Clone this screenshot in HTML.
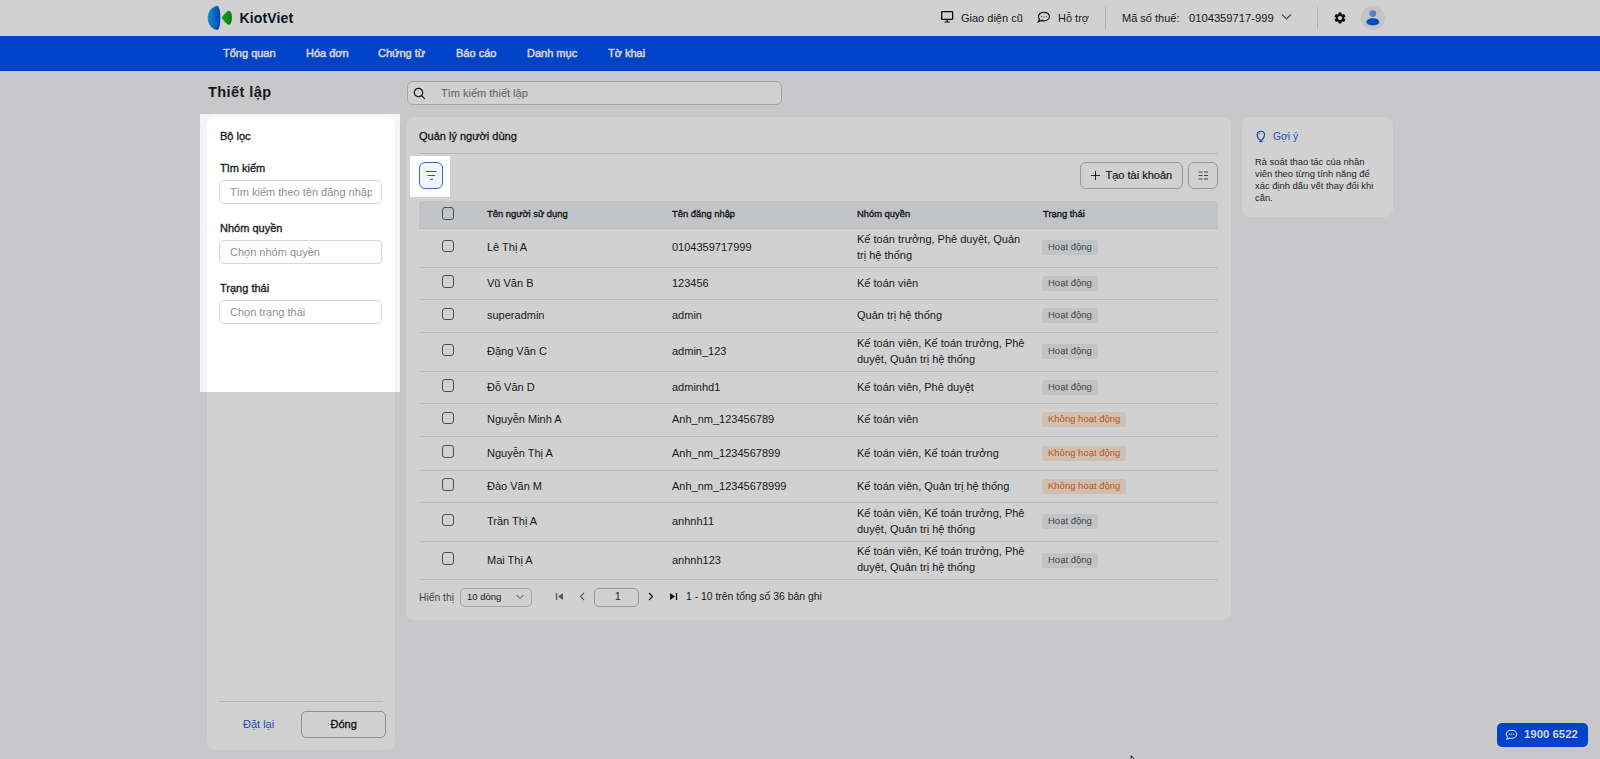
<!DOCTYPE html>
<html><head><meta charset="utf-8">
<style>
*{box-sizing:border-box;margin:0;padding:0}
html,body{width:1600px;height:759px;overflow:hidden}
body{background:#f4f5f7;font-family:"Liberation Sans",sans-serif;color:#1c1c1e;position:relative}
.a{position:absolute}
.hdr{left:0;top:0;width:1600px;height:36px;background:#fff}
.nav{left:0;top:36px;width:1600px;height:35px;background:#0052f5}
.nav span{position:absolute;top:0;line-height:35px;color:#fff;font-size:11px;-webkit-text-stroke:0.5px #fff;white-space:nowrap}
.t11{font-size:11px;white-space:nowrap}
.card{background:#fff;border-radius:8px}
.inp{border:1px solid #d5d8dd;border-radius:5px;background:#fff}
.lbl{font-size:11px;-webkit-text-stroke:0.35px #1c1c1e;white-space:nowrap}
.ph{color:#8a9099;font-size:11px;white-space:nowrap;overflow:hidden}
.cb{position:absolute;left:442px;width:12px;height:12.5px;border:1.2px solid #5b6270;border-radius:3px}
.row{position:absolute;left:419px;width:799px;border-bottom:1px solid #dfe2e6}
.cell{position:absolute;font-size:11px;white-space:nowrap;line-height:15px}
.th{font-size:9.4px;-webkit-text-stroke:0.35px #1c1c1e;white-space:nowrap;color:#1c1c1e}
.bdg{position:absolute;left:1042px;height:15px;border-radius:3px;background:#eceef1;color:#50555c;font-size:9.5px;line-height:14px;padding:0 6px;white-space:nowrap}
.bdg.off{background:#fdebd9;color:#ea6a14}
</style></head><body>
<!-- header -->
<div class="a hdr">
  <svg class="a" style="left:207px;top:5px" width="26" height="26" viewBox="0 0 26 26">
    <defs><linearGradient id="lg1" x1="0" x2="1" y1="0" y2="0"><stop offset="0" stop-color="#1ab0f0"/><stop offset="1" stop-color="#0052e0"/></linearGradient>
    <linearGradient id="lg2" x1="0" x2="1"><stop offset="0" stop-color="#16d020"/><stop offset="1" stop-color="#0a9a18"/></linearGradient></defs>
    <path d="M10 0.8C12.6 1.4 13.3 7 13.3 13C13.3 19 12.6 24.6 10 25.1C4.2 23.6 0.7 19 0.7 13C0.7 7 4.2 2.4 10 0.8Z" fill="url(#lg1)"/>
    <path d="M21.9 5.7C23.9 6 24.9 9 24.9 12.8C24.9 16.6 23.9 19.6 21.9 19.9C20 19.9 15.6 14.6 14.6 12.8C15.6 11 20 5.7 21.9 5.7Z" fill="url(#lg2)"/>
  </svg>
  <div class="a" style="left:239.5px;top:10px;font-size:14px;letter-spacing:0.15px;font-weight:bold;color:#0b1430;white-space:nowrap">KiotViet</div>
</div>
<div class="a nav">
  <span style="left:223px">Tổng quan</span>
  <span style="left:306px">Hóa đơn</span>
  <span style="left:378px">Chứng từ</span>
  <span style="left:456px">Báo cáo</span>
  <span style="left:527px">Danh mục</span>
  <span style="left:608px">Tờ khai</span>
</div>

<!-- title + search -->
<div class="a" style="left:208px;top:83.5px;font-size:14.5px;letter-spacing:0.45px;font-weight:bold;white-space:nowrap">Thiết lập</div>
<div class="a inp" style="left:407px;top:81px;width:375px;height:23.5px;border-color:#c4c8ce;border-radius:6px"></div>
<div class="a ph" style="left:441px;top:87px;color:#6f747b">Tìm kiếm thiết lập</div>

<!-- filter panel -->
<div class="a card" style="left:207px;top:117px;width:188px;height:633px"></div>
<div class="a lbl" style="left:220px;top:130px">Bộ lọc</div>
<div class="a lbl" style="left:220px;top:162px">Tìm kiếm</div>
<div class="a inp" style="left:219px;top:180px;width:163px;height:24px"></div>
<div class="a ph" style="left:230px;top:185.5px;width:142px">Tìm kiếm theo tên đăng nhập</div>
<div class="a lbl" style="left:220px;top:222px">Nhóm quyền</div>
<div class="a inp" style="left:219px;top:240px;width:163px;height:24px"></div>
<div class="a ph" style="left:230px;top:245.5px">Chọn nhóm quyền</div>
<div class="a lbl" style="left:220px;top:282px">Trạng thái</div>
<div class="a inp" style="left:219px;top:300px;width:163px;height:24px"></div>
<div class="a ph" style="left:230px;top:305.5px">Chọn trạng thái</div>
<div class="a" style="left:219px;top:701px;width:164px;height:1px;background:#dfe2e6"></div>
<div class="a t11" style="left:243px;top:718px;color:#1f5ee0">Đặt lại</div>
<div class="a inp" style="left:301px;top:711px;width:85px;height:27px;border-color:#aab0b7;border-radius:5px"></div>
<div class="a t11" style="left:330.5px;top:718px;-webkit-text-stroke:0.35px #1c1c1e">Đóng</div>

<!-- main card -->
<div class="a card" style="left:406px;top:117px;width:825px;height:503px"></div>
<div class="a t11" style="left:419px;top:130px;-webkit-text-stroke:0.3px #1c1c1e">Quản lý người dùng</div>
<div class="a" style="left:419px;top:153px;width:799px;height:1px;background:#dfe2e6"></div>


<!-- filter btn + actions -->
<div class="a" style="left:419px;top:162px;width:24px;height:27px;border:1px solid #3468d8;border-radius:6px;background:#f1f6fe"></div>
<svg class="a" style="left:419px;top:162px" width="24" height="27" viewBox="0 0 24 27"><path d="M7 9.5H17.5M8.5 13.5H16M11 17.3H14" stroke="#1a56d0" stroke-width="1.1"/></svg>
<div class="a" style="left:1080px;top:162px;width:103px;height:27px;border:1px solid #b8bcc3;border-radius:6px"></div>
<svg class="a" style="left:1090px;top:170px" width="11" height="11" viewBox="0 0 11 11"><path d="M5.5 1V10M1 5.5H10" stroke="#1c1c1e" stroke-width="0.9"/></svg>
<div class="a t11" style="left:1105.5px;top:169px;-webkit-text-stroke:0.2px #1c1c1e">Tạo tài khoản</div>
<div class="a" style="left:1188px;top:162px;width:30px;height:27px;border:1px solid #b8bcc3;border-radius:6px"></div>
<svg class="a" style="left:1198px;top:171px" width="11" height="9" viewBox="0 0 11 9"><path d="M0.5 1H4.5M6 1H10M0.5 4.5H4.5M6 4.5H10M0.5 8H4.5M6 8H10" stroke="#3c4048" stroke-width="0.9"/></svg>
<!-- table -->
<div class="a" style="left:419px;top:201px;width:799px;height:28px;background:#eef0f3;border-bottom:1px solid #e2e5e9;border-radius:3px 3px 0 0"></div>
<div class="cb" style="top:207px"></div>
<div class="a th" style="left:487px;top:208px">Tên người sử dụng</div>
<div class="a th" style="left:672px;top:208px">Tên đăng nhập</div>
<div class="a th" style="left:857px;top:208px">Nhóm quyền</div>
<div class="a th" style="left:1043px;top:208px">Trạng thái</div>
<div class="a" style="left:419px;top:267px;width:799px;height:1px;background:#e3e6ea"></div>
<div class="cb" style="top:239.5px"></div>
<div class="cell" style="left:487px;top:240.0px">Lê Thị A</div>
<div class="cell" style="left:672px;top:240.0px">0104359717999</div>
<div class="cell" style="left:857px;top:230.5px;line-height:16px">Kế toán trưởng, Phê duyệt, Quản<br>trị hệ thống</div>
<div class="bdg" style="top:240.0px">Hoạt động</div>
<div class="a" style="left:419px;top:299px;width:799px;height:1px;background:#e3e6ea"></div>
<div class="cb" style="top:275.0px"></div>
<div class="cell" style="left:487px;top:275.5px">Vũ Văn B</div>
<div class="cell" style="left:672px;top:275.5px">123456</div>
<div class="cell" style="left:857px;top:275.5px;line-height:15px">Kế toán viên</div>
<div class="bdg" style="top:275.5px">Hoạt động</div>
<div class="a" style="left:419px;top:332px;width:799px;height:1px;background:#e3e6ea"></div>
<div class="cb" style="top:307.5px"></div>
<div class="cell" style="left:487px;top:308.0px">superadmin</div>
<div class="cell" style="left:672px;top:308.0px">admin</div>
<div class="cell" style="left:857px;top:308.0px;line-height:15px">Quản trị hệ thống</div>
<div class="bdg" style="top:308.0px">Hoạt động</div>
<div class="a" style="left:419px;top:371px;width:799px;height:1px;background:#e3e6ea"></div>
<div class="cb" style="top:343.5px"></div>
<div class="cell" style="left:487px;top:344.0px">Đặng Văn C</div>
<div class="cell" style="left:672px;top:344.0px">admin_123</div>
<div class="cell" style="left:857px;top:334.5px;line-height:16px">Kế toán viên, Kế toán trưởng, Phê<br>duyệt, Quản trị hệ thống</div>
<div class="bdg" style="top:344.0px">Hoạt động</div>
<div class="a" style="left:419px;top:403px;width:799px;height:1px;background:#e3e6ea"></div>
<div class="cb" style="top:379.0px"></div>
<div class="cell" style="left:487px;top:379.5px">Đỗ Văn D</div>
<div class="cell" style="left:672px;top:379.5px">adminhd1</div>
<div class="cell" style="left:857px;top:379.5px;line-height:15px">Kế toán viên, Phê duyệt</div>
<div class="bdg" style="top:379.5px">Hoạt động</div>
<div class="a" style="left:419px;top:436px;width:799px;height:1px;background:#e3e6ea"></div>
<div class="cb" style="top:411.5px"></div>
<div class="cell" style="left:487px;top:412.0px">Nguyễn Minh A</div>
<div class="cell" style="left:672px;top:412.0px">Anh_nm_123456789</div>
<div class="cell" style="left:857px;top:412.0px;line-height:15px">Kế toán viên</div>
<div class="bdg off" style="top:412.0px">Không hoạt động</div>
<div class="a" style="left:419px;top:470px;width:799px;height:1px;background:#e3e6ea"></div>
<div class="cb" style="top:445.0px"></div>
<div class="cell" style="left:487px;top:445.5px">Nguyễn Thị A</div>
<div class="cell" style="left:672px;top:445.5px">Anh_nm_1234567899</div>
<div class="cell" style="left:857px;top:445.5px;line-height:15px">Kế toán viên, Kế toán trưởng</div>
<div class="bdg off" style="top:445.5px">Không hoạt động</div>
<div class="a" style="left:419px;top:502px;width:799px;height:1px;background:#e3e6ea"></div>
<div class="cb" style="top:478.0px"></div>
<div class="cell" style="left:487px;top:478.5px">Đào Văn M</div>
<div class="cell" style="left:672px;top:478.5px">Anh_nm_12345678999</div>
<div class="cell" style="left:857px;top:478.5px;line-height:15px">Kế toán viên, Quản trị hệ thống</div>
<div class="bdg off" style="top:478.5px">Không hoạt động</div>
<div class="a" style="left:419px;top:541px;width:799px;height:1px;background:#e3e6ea"></div>
<div class="cb" style="top:513.5px"></div>
<div class="cell" style="left:487px;top:514.0px">Trần Thị A</div>
<div class="cell" style="left:672px;top:514.0px">anhnh11</div>
<div class="cell" style="left:857px;top:504.5px;line-height:16px">Kế toán viên, Kế toán trưởng, Phê<br>duyệt, Quản trị hệ thống</div>
<div class="bdg" style="top:514.0px">Hoạt động</div>
<div class="a" style="left:419px;top:579px;width:799px;height:1px;background:#e3e6ea"></div>
<div class="cb" style="top:552.0px"></div>
<div class="cell" style="left:487px;top:552.5px">Mai Thị A</div>
<div class="cell" style="left:672px;top:552.5px">anhnh123</div>
<div class="cell" style="left:857px;top:543.0px;line-height:16px">Kế toán viên, Kế toán trưởng, Phê<br>duyệt, Quản trị hệ thống</div>
<div class="bdg" style="top:552.5px">Hoạt động</div>
<!-- pagination -->
<div class="a" style="left:419px;top:591.7px;font-size:10.3px;color:#50555c;white-space:nowrap">Hiển thị</div>
<div class="a inp" style="left:460px;top:588px;width:72px;height:19px;border-color:#c9ccd2"></div>
<div class="a" style="left:467px;top:591px;font-size:9.5px;white-space:nowrap">10 dòng</div>
<svg class="a" style="left:515px;top:593px" width="10" height="8" viewBox="0 0 10 8"><path d="M1.5 2L5 5.5L8.5 2" stroke="#50555c" stroke-width="1" fill="none"/></svg>
<svg class="a" style="left:555px;top:592px" width="9" height="9" viewBox="0 0 9 9"><path d="M1.5 1V8" stroke="#6b6f76" stroke-width="1.3"/><path d="M8 1V8L3 4.5Z" fill="#6b6f76"/></svg>
<svg class="a" style="left:578px;top:592px" width="8" height="9" viewBox="0 0 8 9"><path d="M6 1L2.5 4.5L6 8" stroke="#6b6f76" stroke-width="1.1" fill="none"/></svg>
<div class="a inp" style="left:594px;top:588px;width:45px;height:19px;border-color:#b8bcc3"></div>
<div class="a" style="left:615px;top:591px;font-size:10px;white-space:nowrap">1</div>
<svg class="a" style="left:647px;top:592px" width="8" height="9" viewBox="0 0 8 9"><path d="M2 1L5.5 4.5L2 8" stroke="#1c1c1e" stroke-width="1.2" fill="none"/></svg>
<svg class="a" style="left:669px;top:592px" width="9" height="9" viewBox="0 0 9 9"><path d="M7.5 1V8" stroke="#1c1c1e" stroke-width="1.3"/><path d="M1 1V8L6 4.5Z" fill="#1c1c1e"/></svg>
<div class="a" style="left:686px;top:591px;font-size:10.4px;white-space:nowrap">1 - 10 trên tổng số 36 bản ghi</div>

<!-- hint card -->
<div class="a card" style="left:1242px;top:117px;width:151px;height:100px"></div>
<svg class="a" style="left:1255px;top:129px" width="12" height="15" viewBox="0 0 12 15"><path d="M4.7 11C3.4 9.6 2.1 8.3 2.1 6C2.1 3.8 3.8 2.2 5.8 2.2C7.8 2.2 9.5 3.8 9.5 6C9.5 8.3 8.2 9.6 6.9 11Z" stroke="#1f4fe0" stroke-width="1.15" fill="none" stroke-linejoin="round"/><rect x="4.3" y="11.6" width="3" height="1.6" fill="#1f4fe0"/><path d="M3.9 5.6Q4.2 4.4 5.3 4.1" stroke="#3a6ae8" stroke-width="0.9" fill="none"/></svg>
<div class="a" style="left:1273px;top:131px;font-size:10.3px;color:#1f5ee0;white-space:nowrap">Gợi ý</div>
<div class="a" style="left:1255px;top:155.5px;width:130px;font-size:9.4px;line-height:12px;color:#2a2d33">Rà soát thao tác của nhân<br>viên theo từng tính năng để<br>xác định dấu vết thay đổi khi<br>cần.</div>
<!-- header right -->
<svg class="a" style="left:941px;top:11px" width="13" height="12" viewBox="0 0 13 12"><rect x="0.65" y="0.65" width="11" height="7.7" rx="0.5" stroke="#111" stroke-width="1.3" fill="none"/><path d="M6.15 8.5V10.5M3.5 11H8.8" stroke="#111" stroke-width="1.2"/></svg>
<div class="a t11" style="left:961px;top:12px">Giao diện cũ</div>
<svg class="a" style="left:1037px;top:11px" width="14" height="12" viewBox="0 0 14 12"><path d="M7 1.3C10 1.3 12.4 3.2 12.4 5.6C12.4 8 10 9.9 7 9.9C6.1 9.9 5.2 9.7 4.4 9.4L1.3 10.9L2.4 8.4C1.8 7.6 1.5 6.7 1.5 5.6C1.5 3.2 4 1.3 7 1.3Z" stroke="#111" stroke-width="1.15" fill="none"/><rect x="4.2" y="5" width="0.9" height="1.5" rx="0.4" fill="#333"/><rect x="6.55" y="5" width="0.9" height="1.5" rx="0.4" fill="#333"/><rect x="8.9" y="5" width="0.9" height="1.5" rx="0.4" fill="#333"/></svg>
<div class="a t11" style="left:1058px;top:12px">Hỗ trợ</div>
<div class="a" style="left:1105px;top:7px;width:1px;height:22px;background:#d5d8dd"></div>
<div class="a t11" style="left:1122px;top:12px">Mã số thuế:</div>
<div class="a t11" style="left:1189px;top:12px;font-size:11.2px">0104359717-999</div>
<svg class="a" style="left:1281px;top:13px" width="11" height="8" viewBox="0 0 11 8"><path d="M1 1.5L5.5 6L10 1.5" stroke="#50555c" stroke-width="1.1" fill="none"/></svg>
<div class="a" style="left:1317px;top:7px;width:1px;height:22px;background:#d5d8dd"></div>
<svg class="a" style="left:1332.5px;top:10.5px" width="14" height="14" viewBox="0 0 24 24"><path fill="#111" d="M19.14 12.94c.04-.3.06-.61.06-.94 0-.32-.02-.64-.07-.94l2.03-1.58a.49.49 0 0 0 .12-.61l-1.92-3.32a.49.49 0 0 0-.59-.22l-2.39.96c-.5-.38-1.03-.7-1.62-.94l-.36-2.54a.48.48 0 0 0-.48-.41h-3.84c-.24 0-.43.17-.47.41l-.36 2.54c-.59.24-1.13.57-1.62.94l-2.39-.96a.48.48 0 0 0-.59.22L2.74 8.87c-.12.21-.08.47.12.61l2.03 1.58c-.05.3-.09.63-.09.94s.02.64.07.94l-2.03 1.58a.49.49 0 0 0-.12.61l1.92 3.32c.12.22.37.29.59.22l2.39-.96c.5.38 1.03.7 1.62.94l.36 2.54c.05.24.24.41.48.41h3.84c.24 0 .44-.17.47-.41l.36-2.54c.59-.24 1.13-.56 1.62-.94l2.39.96c.22.08.47 0 .59-.22l1.92-3.32c.12-.22.07-.47-.12-.61l-2.01-1.58zM12 15.6c-1.98 0-3.6-1.62-3.6-3.6s1.62-3.6 3.6-3.6 3.6 1.62 3.6 3.6-1.62 3.6-3.6 3.6z"/></svg>
<div class="a" style="left:1361px;top:6px;width:24px;height:24px;border-radius:50%;background:#eceef1"></div>
<svg class="a" style="left:1361px;top:6px" width="24" height="24" viewBox="0 0 24 24"><circle cx="11.8" cy="7.6" r="3.4" fill="#6e9fe8"/><path d="M5.5 16.1C5.5 13.7 8.5 12.2 11.8 12.2C15.1 12.2 18.3 13.7 18.3 16.1C18.3 18.2 15.3 19.4 11.8 19.4C8.3 19.4 5.5 18.2 5.5 16.1Z" fill="#0060ea"/></svg>
<!-- search icon -->
<svg class="a" style="left:413px;top:86.5px" width="13" height="13" viewBox="0 0 13 13"><circle cx="5.5" cy="5.5" r="4.2" stroke="#1c1c1e" stroke-width="1.2" fill="none"/><path d="M8.5 8.5L11.8 11.8" stroke="#1c1c1e" stroke-width="1.2"/></svg>
<!-- float btn -->
<div class="a" style="left:1497px;top:723px;width:91px;height:24px;border-radius:5px;background:#0052f5"></div>
<svg class="a" style="left:1505px;top:729px" width="13" height="12" viewBox="0 0 13 12"><path d="M6.5 1.3C9.5 1.3 11.7 3 11.7 5.3C11.7 7.6 9.5 9.3 6.5 9.3C5.8 9.3 5.1 9.2 4.5 9L1.8 10.3L2.5 8.2C1.7 7.4 1.3 6.4 1.3 5.3C1.3 3 3.5 1.3 6.5 1.3Z" stroke="#fff" stroke-width="1.1" fill="none"/><circle cx="4.5" cy="5.3" r="0.75" fill="#fff"/><circle cx="6.5" cy="5.3" r="0.75" fill="#fff"/><circle cx="8.5" cy="5.3" r="0.75" fill="#fff"/></svg>
<div class="a" style="left:1524px;top:728px;font-size:11.4px;font-weight:bold;color:#fff;white-space:nowrap">1900 6522</div>

<!-- overlay -->
<svg class="a" style="left:0;top:0" width="1600" height="759">
  <path fill="rgba(0,0,0,0.18)" fill-rule="evenodd" d="M0 0H1600V759H0Z M200 114H400V392H200Z M410 156H450V197H410Z"/>
</svg>
<svg class="a" style="left:1130px;top:754.5px" width="12" height="6" viewBox="0 0 12 6"><path d="M1.2 0.6V6H5.8Z" fill="#f4f4f4" stroke="#1a1a1a" stroke-width="1"/></svg>
</body></html>
